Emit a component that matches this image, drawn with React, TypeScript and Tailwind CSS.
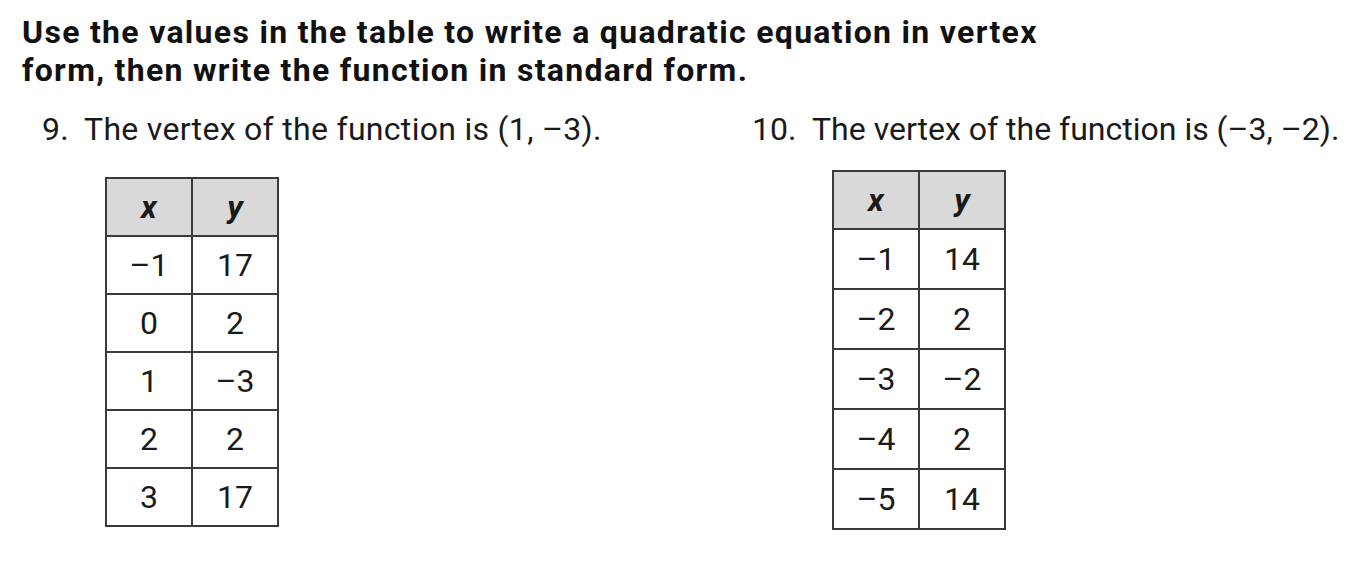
const font = { fontFamily: "Roboto, 'Liberation Sans', sans-serif" };

type Row = [string, string];

const table9: Row[] = [
  ["–1", "17"],
  ["0", "2"],
  ["1", "–3"],
  ["2", "2"],
  ["3", "17"],
];

const table10: Row[] = [
  ["–1", "14"],
  ["–2", "2"],
  ["–3", "–2"],
  ["–4", "2"],
  ["–5", "14"],
];

function ValueTable({ rows, headH, rowH }: { rows: Row[]; headH: string; rowH: string }) {
  return (
    <table className="border-collapse border-2 border-[#3a3a3a] text-[32px] text-[#1a1a1a]">
      <thead>
        <tr className="bg-[#d9d9d9]">
          <th className={`w-[86px] ${headH} border-2 border-[#3a3a3a] font-bold italic`}>x</th>
          <th className={`w-[86px] ${headH} border-2 border-[#3a3a3a] font-bold italic`}>y</th>
        </tr>
      </thead>
      <tbody>
        {rows.map(([x, y], i) => (
          <tr key={i}>
            <td className={`${rowH} border-2 border-[#3a3a3a] text-center`}>{x}</td>
            <td className={`${rowH} border-2 border-[#3a3a3a] text-center`}>{y}</td>
          </tr>
        ))}
      </tbody>
    </table>
  );
}

export default function App() {
  return (
    <div className="w-[1369px] h-[574px] bg-white text-[#111] overflow-hidden" style={font}>
      <div className="pl-[22px] pt-[13px] text-[32px] font-bold leading-[38px] tracking-[1.3px]">
        <p>Use the values in the table to write a quadratic equation in vertex</p>
        <p>form, then write the function in standard form.</p>
      </div>

      <div className="flex mt-[20px]">
        <div className="w-[710px] pl-[42px]">
          <p className="text-[32px] leading-[40px] text-[#1a1a1a] tracking-[0.3px]">
            <span className="inline-block w-[42px]">9.</span>The vertex of the function is (1, –3).
          </p>
          <div className="pl-[63px] mt-[28px]">
            <ValueTable rows={table9} headH="h-[58px]" rowH="h-[58px]" />
          </div>
        </div>

        <div className="pl-[42px]">
          <p className="text-[32px] leading-[40px] text-[#1a1a1a]">
            <span className="inline-block w-[60px]">10.</span>The vertex of the function is (–3, –2).
          </p>
          <div className="pl-[80px] mt-[21px]">
            <ValueTable rows={table10} headH="h-[58px]" rowH="h-[60px]" />
          </div>
        </div>
      </div>
    </div>
  );
}
